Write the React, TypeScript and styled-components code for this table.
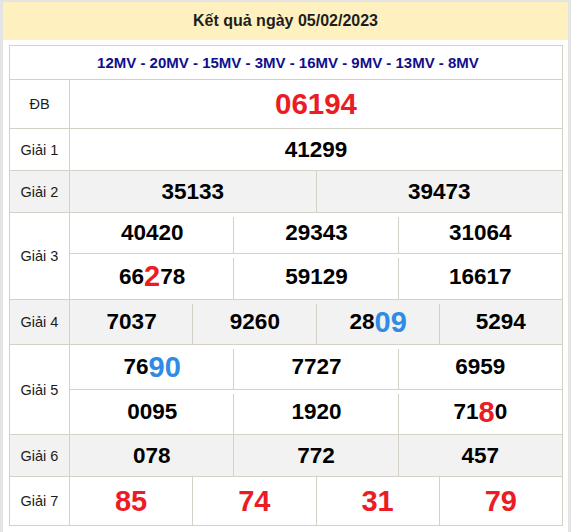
import React from "react";
import styled, { createGlobalStyle, css } from "styled-components";

const Global = createGlobalStyle`
  html, body { margin: 0; padding: 0; }
  body {
    background: #e4e4e4;
    font-family: "Liberation Sans", Arial, sans-serif;
  }
  * { box-sizing: border-box; }
`;

const LINE = "#d5d1c9";
const RED = "#ec1c24";
const BLUE = "#2f8be3";

const Page = styled.div`
  padding: 2px 3px 0 3px;
  width: 571px;
`;

const Panel = styled.div`
  background: #ffffff;
  padding: 0 4px 10px 6px;
`;

const Header = styled.div`
  background: #fff1bf;
  height: 38px;
  margin: 0 -4px 5px -6px;
  display: flex;
  align-items: center;
  justify-content: center;
  font-weight: bold;
  font-size: 16px;
  color: #1e1e1e;
`;

const Board = styled.div`
  display: grid;
  grid-template-columns: 60px repeat(12, 1fr);
  grid-template-rows: 34px 49px 42px 42px 41px 46px 45px 45px 45px 42px 49px;
  border-top: 1px solid ${LINE};
  border-left: 1px solid ${LINE};
  width: 554px;
`;

const cellBase = css<{ $alt?: boolean }>`
  display: flex;
  align-items: center;
  justify-content: center;
  border-bottom: 1px solid ${LINE};
  background-color: ${(p) => (p.$alt ? "#f2f2f2" : "#ffffff")};
`;

const CodeRow = styled.div`
  ${cellBase};
  grid-column: 1 / -1;
  border-right: 1px solid ${LINE};
  color: #10108c;
  font-weight: bold;
  font-size: 15px;
  padding-left: 4px;
`;

const Label = styled.div<{ $alt?: boolean; $rows?: number }>`
  ${cellBase};
  grid-row: span ${(p) => p.$rows ?? 1};
  border-right: 1px solid ${LINE};
  font-size: 14.5px;
  color: #1c1c1c;
`;

const Num = styled.div<{
  $alt?: boolean;
  $span: number;
  $gap?: boolean;
  $size?: number;
  $red?: boolean;
}>`
  ${cellBase};
  grid-column: span ${(p) => p.$span};
  font-weight: bold;
  font-size: ${(p) => p.$size ?? 22.5}px;
  color: ${(p) => (p.$red ? RED : "#000000")};
  ${(p) =>
    p.$gap
      ? css`
          border-right: none;
          background-image: linear-gradient(${LINE}, ${LINE});
          background-repeat: no-repeat;
          background-position: right 4px;
          background-size: 1px calc(100% - 4px);
          &[data-last="1"] {
            border-right: 1px solid ${LINE};
            background-image: none;
          }
        `
      : css`
          border-right: 1px solid ${LINE};
        `}
`;

const Hi = styled.span<{ $tone: "red" | "blue" }>`
  font-size: 29px;
  color: ${(p) => (p.$tone === "red" ? RED : BLUE)};
`;

type Part = { t: string; hi?: "red" | "blue" };

const renderNum = (parts: Part[]) =>
  parts.map((p, i) =>
    p.hi ? (
      <Hi key={i} $tone={p.hi}>
        {p.t}
      </Hi>
    ) : (
      <React.Fragment key={i}>{p.t}</React.Fragment>
    )
  );

type RowDef = {
  label: string;
  alt?: boolean;
  gap?: boolean;
  size?: number;
  red?: boolean;
  lines: Part[][][];
};

const rows: RowDef[] = [
  { label: "ĐB", size: 29.5, red: true, lines: [[[{ t: "06194" }]]] },
  { label: "Giải 1", lines: [[[{ t: "41299" }]]] },
  { label: "Giải 2", alt: true, lines: [[[{ t: "35133" }], [{ t: "39473" }]]] },
  {
    label: "Giải 3",
    gap: true,
    lines: [
      [[{ t: "40420" }], [{ t: "29343" }], [{ t: "31064" }]],
      [
        [{ t: "66" }, { t: "2", hi: "red" }, { t: "78" }],
        [{ t: "59129" }],
        [{ t: "16617" }],
      ],
    ],
  },
  {
    label: "Giải 4",
    alt: true,
    gap: true,
    lines: [
      [
        [{ t: "7037" }],
        [{ t: "9260" }],
        [{ t: "28" }, { t: "09", hi: "blue" }],
        [{ t: "5294" }],
      ],
    ],
  },
  {
    label: "Giải 5",
    gap: true,
    lines: [
      [[{ t: "76" }, { t: "90", hi: "blue" }], [{ t: "7727" }], [{ t: "6959" }]],
      [[{ t: "0095" }], [{ t: "1920" }], [{ t: "71" }, { t: "8", hi: "red" }, { t: "0" }]],
    ],
  },
  { label: "Giải 6", alt: true, lines: [[[{ t: "078" }], [{ t: "772" }], [{ t: "457" }]]] },
  {
    label: "Giải 7",
    size: 29,
    red: true,
    lines: [[[{ t: "85" }], [{ t: "74" }], [{ t: "31" }], [{ t: "79" }]]],
  },
];

export default function App() {
  return (
    <Page>
      <Global />
      <Panel>
        <Header>Kết quả ngày 05/02/2023</Header>
        <Board>
          <CodeRow>12MV - 20MV - 15MV - 3MV - 16MV - 9MV - 13MV - 8MV</CodeRow>
          {rows.map((r) => (
            <React.Fragment key={r.label}>
              <Label $alt={r.alt} $rows={r.lines.length}>
                {r.label}
              </Label>
              {r.lines.map((line, li) =>
                line.map((cell, ci) => (
                  <Num
                    key={`${li}-${ci}`}
                    $alt={r.alt}
                    $span={12 / line.length}
                    $gap={r.gap}
                    $size={r.size}
                    $red={r.red}
                    data-last={ci === line.length - 1 ? "1" : "0"}
                  >
                    {renderNum(cell)}
                  </Num>
                ))
              )}
            </React.Fragment>
          ))}
        </Board>
      </Panel>
    </Page>
  );
}
